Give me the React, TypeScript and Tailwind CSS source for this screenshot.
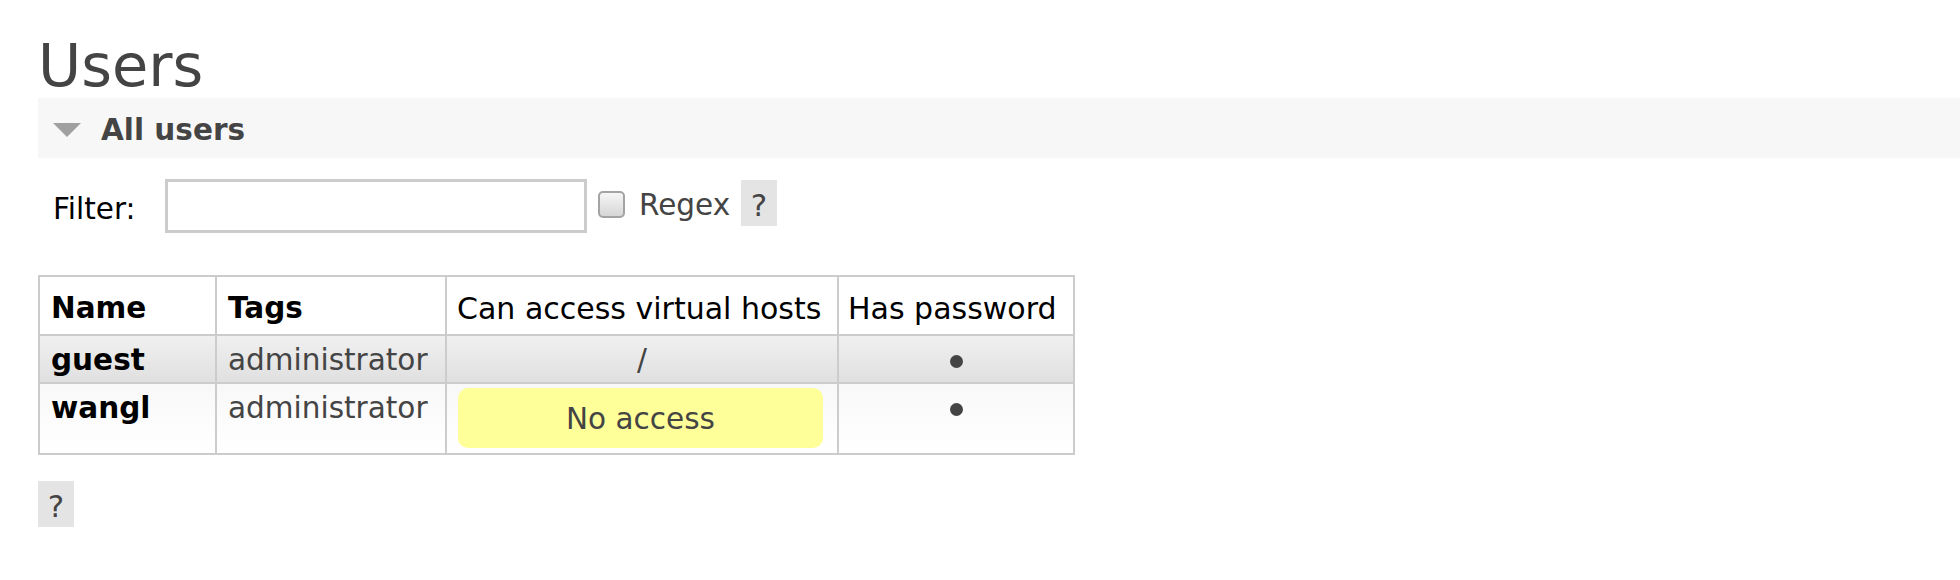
import React from "react";

function HelpBox() {
  return (
    <div className="h-[46px] w-[36px] bg-[#e4e4e4] pt-[8px] text-center text-[31px] leading-[35px] text-[#444]">?</div>
  );
}

function Dot() {
  return (
    <div className="flex h-[35px] justify-center">
      <div className="mt-[15px] h-[13px] w-[13px] rounded-full bg-[#444]" />
    </div>
  );
}

export default function App() {
  return (
    <div className="min-h-[580px] w-full bg-white pl-[38px] font-['DejaVu_Sans',Verdana,sans-serif] text-[29.5px] leading-[35px] text-black">
      <h1 className="pt-[37px] text-[59px] font-normal leading-[58px] text-[#444]">Users</h1>

      <div className="mt-[3px] flex h-[60px] items-start bg-[#f7f7f7] pl-[15px] pt-[15px]">
        <svg width="28" height="14" viewBox="0 0 28 14" className="mt-[10px] shrink-0">
          <polygon points="0,0 28,0 14,14" fill="#a0a0a0" />
        </svg>
        <h2 className="ml-[20px] font-bold text-[#444]">All users</h2>
      </div>

      <div className="mt-[21px] flex items-start">
        <label className="ml-[15px] mt-[13px] w-[112px] shrink-0">Filter:</label>
        <div className="h-[54px] w-[422px] shrink-0 border-[3px] border-[#cccccc] bg-white" />
        <div className="ml-[11px] mt-[12px] h-[27px] w-[27px] shrink-0 rounded-[5px] border-2 border-[#a3a3a3] bg-gradient-to-b from-[#f6f6f6] to-[#d6d6d6]" />
        <span className="ml-[14px] mt-[9px] inline-block w-[102px] shrink-0 text-[#444]">Regex</span>
        <div className="mt-[1px]">
          <HelpBox />
        </div>
      </div>

      <table className="mt-[42px] w-[1035px] table-fixed border-collapse">
        <colgroup>
          <col className="w-[177px]" />
          <col className="w-[230px]" />
          <col className="w-[392px]" />
          <col className="w-[236px]" />
        </colgroup>
        <thead>
          <tr className="bg-white">
            <th className="border-2 border-[#cccccc] pb-[8px] pl-[11px] pt-[14px] text-left font-bold">Name</th>
            <th className="border-2 border-[#cccccc] pb-[8px] pl-[11px] pt-[14px] text-left font-bold">Tags</th>
            <th className="border-2 border-[#cccccc] pb-[8px] pl-[10px] pt-[14px] text-left text-[30px] font-normal whitespace-nowrap">Can access virtual hosts</th>
            <th className="border-2 border-[#cccccc] pb-[8px] pl-[9px] pt-[14px] text-left text-[30px] font-normal whitespace-nowrap">Has password</th>
          </tr>
        </thead>
        <tbody>
          <tr>
            <td className="border-2 border-[#cccccc] bg-gradient-to-b from-[#f0f0f0] to-[#e0e0e0] pb-[4px] pl-[11px] pt-[7px] align-top font-bold">guest</td>
            <td className="border-2 border-[#cccccc] bg-gradient-to-b from-[#f0f0f0] to-[#e0e0e0] pb-[4px] pl-[11px] pt-[7px] align-top text-[#444]">administrator</td>
            <td className="border-2 border-[#cccccc] bg-gradient-to-b from-[#f0f0f0] to-[#e0e0e0] pb-[4px] pt-[7px] text-center align-top text-[#444]">/</td>
            <td className="border-2 border-[#cccccc] bg-gradient-to-b from-[#f0f0f0] to-[#e0e0e0] pb-[7px] pt-[4px] align-top">
              <Dot />
            </td>
          </tr>
          <tr>
            <td className="border-2 border-[#cccccc] bg-gradient-to-b from-[#f8f8f8] to-[#ffffff] pb-[5px] pl-[11px] pt-[7px] align-top font-bold">wangl</td>
            <td className="border-2 border-[#cccccc] bg-gradient-to-b from-[#f8f8f8] to-[#ffffff] pb-[5px] pl-[11px] pt-[7px] align-top text-[#444]">administrator</td>
            <td className="border-2 border-[#cccccc] bg-gradient-to-b from-[#f8f8f8] to-[#ffffff] pb-[5px] pl-[11px] pr-[11px] pt-[4px] align-top">
              <div className="mr-[3px] h-[60px] rounded-[10px] bg-[#ffff99] pt-[14px] text-center text-[#444]">No access</div>
            </td>
            <td className="border-2 border-[#cccccc] bg-gradient-to-b from-[#f8f8f8] to-[#ffffff] pb-[5px] pt-[4px] align-top">
              <Dot />
            </td>
          </tr>
        </tbody>
      </table>

      <div className="mt-[26px]">
        <HelpBox />
      </div>
    </div>
  );
}
